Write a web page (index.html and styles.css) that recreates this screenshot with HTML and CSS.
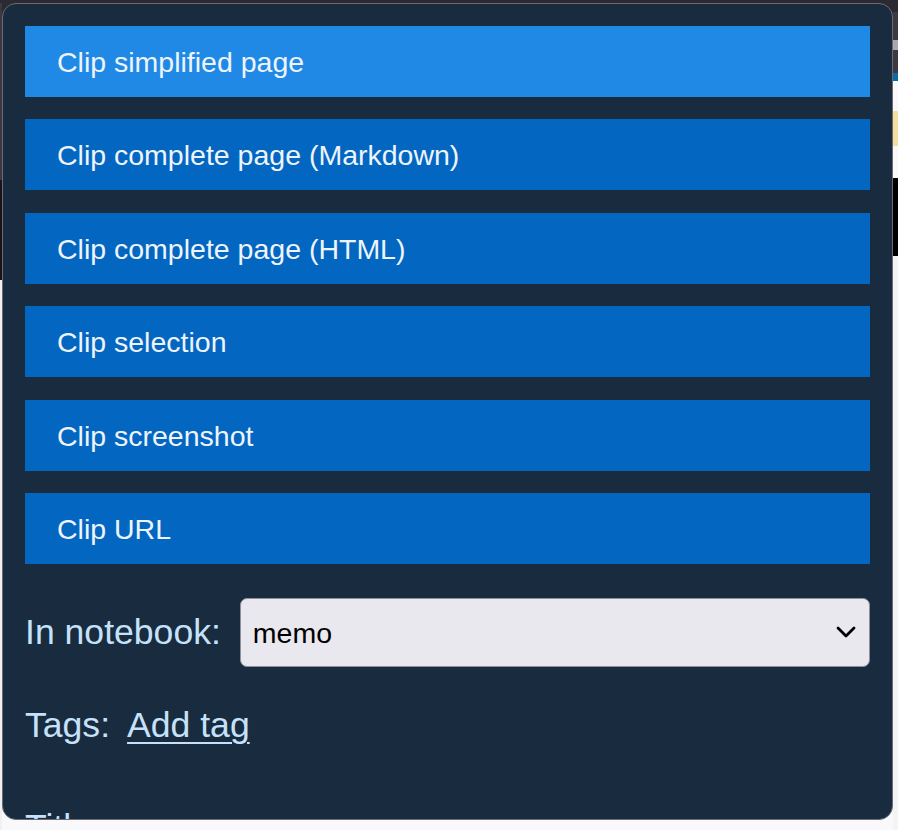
FILE: index.html
```html
<!DOCTYPE html>
<html lang="en">
<head>
<meta charset="utf-8">
<title>Web Clipper</title>
<link rel="stylesheet" href="styles.css">
</head>
<body>
<div class="desk">
  <div class="topbar"></div>
  <div class="row">
    <div class="side side-left">
      <div class="seg s-dark1"></div>
      <div class="seg s-black1"></div>
      <div class="seg s-light"></div>
    </div>
    <div class="popup">
      <div class="actions">
        <button class="clip-btn active">Clip simplified page</button>
        <button class="clip-btn">Clip complete page (Markdown)</button>
        <button class="clip-btn">Clip complete page (HTML)</button>
        <button class="clip-btn">Clip selection</button>
        <button class="clip-btn">Clip screenshot</button>
        <button class="clip-btn">Clip URL</button>
      </div>
      <div class="notebook-row">
        <label class="label" for="nb">In notebook:</label>
        <div class="select-wrap">
          <select id="nb" class="select"><option>memo</option></select>
          <svg class="chevron" width="20" height="12" viewBox="0 0 20 12"><path d="M2 2 L10 10 L18 2" fill="none" stroke="#000" stroke-width="2.8" stroke-linecap="round" stroke-linejoin="round"/></svg>
        </div>
      </div>
      <div class="tags-row">
        <span class="label">Tags:</span><a class="add-tag" href="#">Add tag</a>
      </div>
      <div class="title-row">
        <span class="label">Title:</span>
      </div>
    </div>
    <div class="side side-right">
      <div class="seg r-dark"></div>
      <div class="seg r-gray"></div>
      <div class="seg r-text"></div>
      <div class="seg r-gray2"></div>
      <div class="seg r-blue"></div>
      <div class="seg r-white"></div>
      <div class="seg r-yellow"></div>
      <div class="seg r-white2"></div>
      <div class="seg r-black"></div>
      <div class="seg r-light"></div>
    </div>
  </div>
</div>
</body>
</html>
```

FILE: styles.css
```css
* { box-sizing: border-box; }

html, body {
  margin: 0;
  padding: 0;
}

body {
  width: 898px;
  height: 830px;
  overflow: hidden;
  background: #f9f9fb;
  font-family: "Liberation Sans", Arial, sans-serif;
}

.desk {
  display: flex;
  flex-direction: column;
  width: 898px;
  height: 830px;
}

.topbar {
  height: 3px;
  background: #2b2a33;
  flex: none;
}

.row {
  flex: 1;
  display: flex;
  align-items: flex-start;
  background: linear-gradient(#2b2a33 0 60px, #f9f9fb 60px);
}

.side {
  display: flex;
  flex-direction: column;
  align-self: stretch;
  flex: none;
}

.side-left { width: 2px; }
.side-right { width: 5px; }

.seg { flex: none; }

.s-dark1 { height: 177px; background: #3a3940; }
.s-black1 { height: 100px; background: #15151a; }
.s-light { flex: 1; background: #f0f0f4; }

.r-dark { height: 9px; background: #2b2a33; }
.r-gray { height: 28px; background: #3b3a42; }
.r-text { height: 10px; background: #a9a8ae; }
.r-gray2 { height: 23px; background: #3b3a42; }
.r-blue { height: 8px; background: #0b6aa6; }
.r-white { height: 30px; background: #f9f9fb; }
.r-yellow { height: 35px; background: #f2e09f; }
.r-white2 { height: 32px; background: #f9f9fb; }
.r-black { height: 78px; background: #000; }
.r-light { flex: 1; background: #f4f4f6; }

.popup {
  width: 891px;
  height: 817px;
  flex: none;
  background: #182b3f;
  border: 1px solid #6c6b75;
  border-radius: 14px;
  padding: 22px 22px 0 22px;
  overflow: hidden;
}

.actions {
  display: flex;
  flex-direction: column;
  gap: 22.4px;
}

.clip-btn {
  display: block;
  width: 100%;
  height: 71px;
  margin: 0;
  border: none;
  border-radius: 0;
  background: #0366c0;
  color: #eef4fb;
  font-family: "Liberation Sans", Arial, sans-serif;
  font-size: 28.5px;
  text-align: left;
  padding: 2px 0 0 32px;
  cursor: pointer;
}

.clip-btn.active {
  background: #1f89e5;
}

.notebook-row {
  display: flex;
  align-items: center;
  margin-top: 34px;
  height: 69px;
}

.label {
  color: #c6e2fa;
  font-size: 35.6px;
  line-height: 40px;
}

.select-wrap {
  position: relative;
  flex: 1;
  margin-left: 19px;
  height: 69px;
}

.select {
  appearance: none;
  -webkit-appearance: none;
  width: 100%;
  height: 69px;
  margin: 0;
  background: #e9e8ee;
  border: 1.5px solid #8f8f9d;
  border-radius: 7px;
  color: #000;
  font-family: "Liberation Sans", Arial, sans-serif;
  font-size: 28.5px;
  padding: 2px 40px 0 12px;
}

.chevron {
  position: absolute;
  right: 14px;
  top: 28px;
  pointer-events: none;
}

.tags-row {
  margin-top: 38px;
  height: 40px;
  display: flex;
  align-items: baseline;
}

.add-tag {
  margin-left: 17px;
  color: #c6e2fa;
  font-size: 35.6px;
  line-height: 40px;
  text-decoration: underline;
  text-decoration-thickness: 2px;
  text-underline-offset: 5px;
}

.title-row {
  margin-top: 62px;
  height: 40px;
}
```
